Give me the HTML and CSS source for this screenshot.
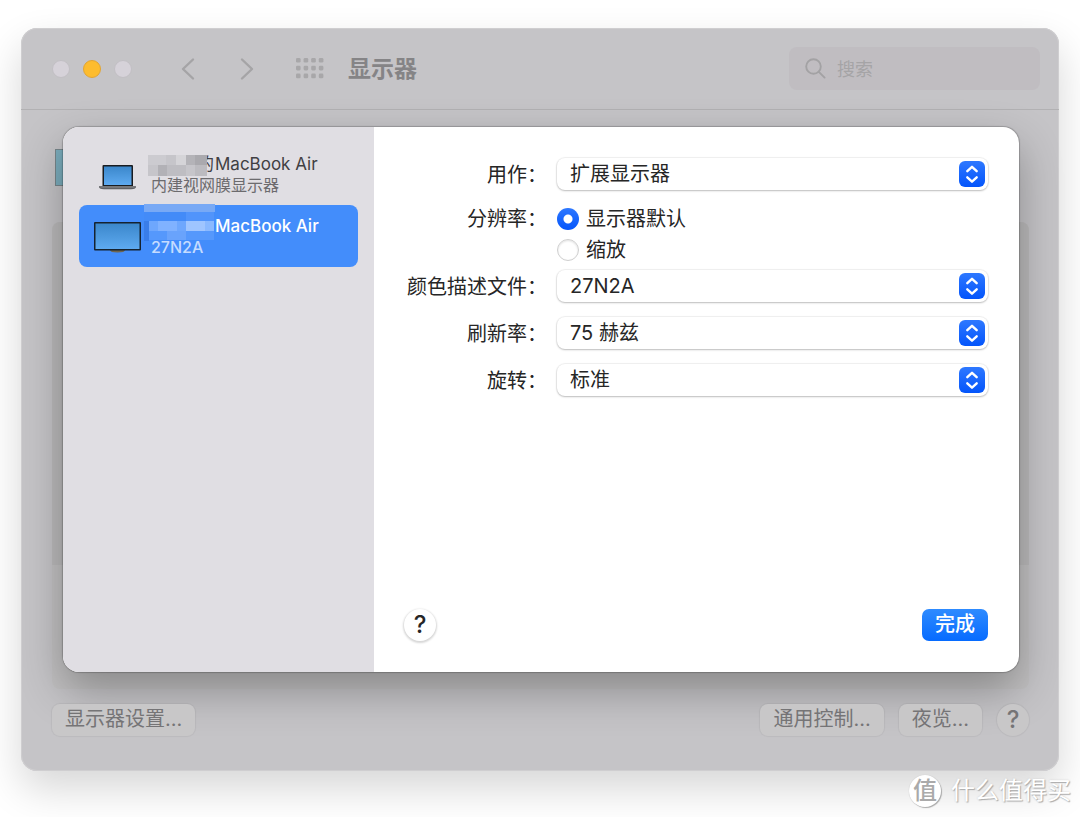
FILE: index.html
```html
<!DOCTYPE html>
<html lang="zh-CN">
<head>
<meta charset="utf-8">
<title>显示器</title>
<meta name="viewport" content="width=device-width, initial-scale=1">
<link rel="stylesheet" href="styles.css">
</head>
<body>
<svg class="defs" aria-hidden="true">
  <defs>
    <linearGradient id="screen" x1="0" y1="0" x2="0" y2="1">
      <stop offset="0" stop-color="#3b87cb"/><stop offset="1" stop-color="#5eaaf0"/>
    </linearGradient>
    <symbol id="chevrons" viewBox="0 0 26 26">
      <path d="M8.300 10.200 13 5.800l4.700 4.400M8.300 16.300 13 20.700l4.700-4.400" fill="none" stroke="#fff" stroke-width="2.400" stroke-linecap="round" stroke-linejoin="round"/>
    </symbol>
  </defs>
</svg>

<main class="window">
  <header class="toolbar">
    <div class="lights">
      <button class="light" aria-label="关闭"></button>
      <button class="light light--minimize" aria-label="最小化"></button>
      <button class="light" aria-label="缩放窗口"></button>
    </div>
    <nav class="nav">
      <button class="plain" aria-label="后退"><svg width="14" height="24" viewBox="0 0 14 24"><path d="M12 2.500 2 12l10 9.500" fill="none" stroke="#a5a4a6" stroke-width="2.400" stroke-linecap="round" stroke-linejoin="round"/></svg></button>
      <button class="plain" aria-label="前进"><svg width="14" height="24" viewBox="0 0 14 24"><path d="M2 2.500 12 12 2 21.500" fill="none" stroke="#a5a4a6" stroke-width="2.400" stroke-linecap="round" stroke-linejoin="round"/></svg></button>
    </nav>
    <button class="plain" aria-label="显示全部">
      <svg width="28" height="21" viewBox="0 0 28 21" fill="#a8a7a9">
        <g id="dots"><rect x="0" width="4.600" height="4.600" rx="1.300"/><rect x="7.600" width="4.600" height="4.600" rx="1.300"/><rect x="15.200" width="4.600" height="4.600" rx="1.300"/><rect x="22.800" width="4.600" height="4.600" rx="1.300"/></g>
        <use href="#dots" y="7.800"/><use href="#dots" y="15.600"/>
      </svg>
    </button>
    <h1 class="title">显示器</h1>
    <label class="search">
      <svg width="21" height="21" viewBox="0 0 21 21" fill="none" stroke="#a3a2a4" stroke-width="1.900" stroke-linecap="round"><circle cx="8.500" cy="8.500" r="7.300"/><path d="m13.800 13.800 5.800 5.800"/></svg>
      <input type="search" placeholder="搜索" aria-label="搜索">
    </label>
  </header>

  <section class="content">
    <div class="thumb"></div>
    <div class="panel"><div class="panel-top"></div></div>
    <footer class="actions">
      <button class="btn">显示器设置...</button>
      <div class="actions-end">
        <button class="btn">通用控制...</button>
        <button class="btn">夜览...</button>
        <button class="help help--dim" aria-label="帮助">?</button>
      </div>
    </footer>
  </section>

  <section class="sheet" role="dialog" aria-label="显示器设置">
    <aside class="sidebar">
      <button class="device">
        <svg class="device-icon" width="48" height="40" viewBox="0 0 48 40">
          <rect x="8.500" y="11" width="30.500" height="22" rx="1" fill="#191c20"/>
          <rect x="10" y="12.500" width="27.500" height="18.500" fill="url(#screen)"/>
          <path d="M5 32h37v1.500q-2 1.500-5 1.500H10q-3 0-5-1.500z" fill="#77787b"/><path d="M5.500 33.700q2 1.100 4.500 1.100h27q2.500 0 4.500-1.100" fill="none" stroke="#505155" stroke-width=".8"/>
        </svg>
        <span class="device-text">
          <span class="device-name">
            <svg class="mosaic" width="59" height="21" viewBox="0 0 59 21" shape-rendering="crispEdges">
              <rect width="59" height="21" fill="#c6c5ca"/><path d="M0 0h18v10H0z" fill="#cccbd0"/><path d="M28 0h10v10H28z" fill="#d5d4d8"/><path d="M38 0h9v10H38z" fill="#b4b3b8"/><path d="M47 0h12v10H47z" fill="#aaa9ae"/><path d="M10 10h9v11H10z" fill="#b2b1b6"/><path d="M19 10h19v11H19z" fill="#bebdc2"/><path d="M47 10h12v11H47z" fill="#bcbbc0"/>
            </svg><span>的</span><span class="model">MacBook Air</span>
          </span>
          <span class="device-sub">内建视网膜显示器</span>
        </span>
      </button>
      <button class="device device--selected" aria-current="true">
        <svg class="device-icon" width="48" height="40" viewBox="0 0 48 40">
          <path d="M16 34h15q0 2.500-7.500 2.500T16 34z" fill="#6f6650"/>
          <rect x="0" y="6" width="47" height="28.500" rx="1" fill="#15222f"/>
          <rect x="1.500" y="7.500" width="44" height="25.500" fill="url(#screen)"/>
        </svg>
        <span class="device-text">
          <span class="device-name">
            <svg class="mosaic mosaic--selected" width="71" height="37" viewBox="0 0 71 37" shape-rendering="crispEdges">
              <path d="M0 0h71v8H0z" fill="#78a9f5"/><path d="M0 8h42v9H0z" fill="#438bf8"/><path d="M42 8h28v9H42z" fill="#5194fb"/><path d="M0 17h5v20H0z" fill="#397de9"/><path d="M5 17h65v10H5z" fill="#6ea7fd"/><path d="M14 17h19v10H14z" fill="#80b2ff"/><path d="M42 17h19v10H42z" fill="#9fc5ff"/><path d="M61 17h9v10h-9z" fill="#8ab9ff"/><path d="M5 27h65v9H5z" fill="#5598fc"/><path d="M23 27h19v9H23z" fill="#69a3fc"/>
            </svg><span class="model">MacBook Air</span>
          </span>
          <span class="device-sub">27N2A</span>
        </span>
      </button>
    </aside>

    <form class="settings">
      <div class="fields">
        <div class="field">
          <label class="label" for="use">用作：</label>
          <div class="select"><select id="use"><option>扩展显示器</option></select><span class="knob"><svg width="26" height="26"><use href="#chevrons"/></svg></span></div>
        </div>
        <div class="field field--choices" role="radiogroup" aria-labelledby="res">
          <span class="label" id="res">分辨率：</span>
          <div class="choices">
            <label class="choice"><input type="radio" name="res" checked>显示器默认</label>
            <label class="choice"><input type="radio" name="res">缩放</label>
          </div>
        </div>
        <div class="field">
          <label class="label" for="profile">颜色描述文件：</label>
          <div class="select"><select id="profile"><option>27N2A</option></select><span class="knob"><svg width="26" height="26"><use href="#chevrons"/></svg></span></div>
        </div>
        <div class="field">
          <label class="label" for="rate">刷新率：</label>
          <div class="select"><select id="rate"><option>75 赫兹</option></select><span class="knob"><svg width="26" height="26"><use href="#chevrons"/></svg></span></div>
        </div>
        <div class="field">
          <label class="label" for="rotation">旋转：</label>
          <div class="select"><select id="rotation"><option>标准</option></select><span class="knob"><svg width="26" height="26"><use href="#chevrons"/></svg></span></div>
        </div>
      </div>
      <div class="sheet-actions">
        <button type="button" class="help" aria-label="帮助">?</button>
        <button type="button" class="done">完成</button>
      </div>
    </form>
  </section>
</main>

<div class="watermark"><span class="badge">值</span><span>什么值得买</span></div>
</body>
</html>
```

FILE: styles.css
```css
* { box-sizing: border-box; }

body {
  position: relative;
  display: flex;
  min-height: 100vh;
  margin: 0;
  padding: 28px 21px 46px;
  overflow-x: hidden;
  background: #fff;
  color: #262626;
  font: 20px/28px Inter, "Noto Sans CJK SC", sans-serif;
}

button, input, select { margin: 0; font: inherit; color: inherit; }
button { padding: 0; border: 0; background: none; }
svg { display: block; flex: none; }
.defs { position: absolute; width: 0; height: 0; }

.window {
  position: relative;
  display: flex;
  flex: 1;
  flex-direction: column;
  min-width: 0;
  border-radius: 16px;
  background: #c5c4c7;
  box-shadow: inset 0 0 0 1px #cfced0, 0 18px 40px rgba(0, 0, 0, .16);
}

/* Toolbar */
.toolbar {
  display: flex;
  align-items: center;
  height: 82px;
  padding: 0 19px 0 31px;
  border-bottom: 1px solid #b2b1b3;
}
.lights { display: flex; gap: 13px; }
.light {
  width: 18px;
  height: 18px;
  border: 1px solid #c2bfc4;
  border-radius: 50%;
  background: #d6d2d9;
}
.light--minimize { border-color: #e2a532; background: #fdbc2e; }
.nav { display: flex; gap: 45px; margin: 0 42px 0 49px; }
.title {
  margin: 0 0 0 24px;
  color: #858486;
  font-size: 23px;
  font-weight: 700;
  line-height: 32px;
}
.search {
  display: flex;
  align-items: center;
  gap: 11px;
  width: 251px;
  height: 43px;
  margin-left: auto;
  padding: 0 16px;
  border-radius: 8px;
  background: #c0bdc1;
}
.search input {
  flex: 1;
  min-width: 0;
  padding: 2px 0 0;
  border: 0;
  outline: 0;
  background: none;
  font-size: 18px;
}
.search input::placeholder { color: #a5a4a6; opacity: 1; }

/* Window content */
.content {
  display: flex;
  flex: 1;
  flex-direction: column;
  padding: 39px 30px 35px 31px;
}
.thumb {
  width: 60px;
  height: 37px;
  margin-left: 3px;
  border: 1px solid #77868b;
  background: #7badbd;
}
.panel {
  flex: 1;
  margin: 36px 0 15px;
  overflow: hidden;
  border-radius: 8px;
  background: #c2c1c2;
}
.panel-top { height: 343px; background: #bbbabb; }
.actions { display: flex; justify-content: space-between; color: #757476; }
.actions-end { display: flex; gap: 15px; }
.btn {
  position: relative;
  z-index: 2;
  height: 32px;
  padding: 0 13px 2px;
  border-radius: 8px;
  background: #c8c7c8;
  box-shadow: 0 0 1px 1px rgba(0, 0, 0, .05);
}
.help {
  width: 32px;
  height: 32px;
  border-radius: 50%;
  background: #fff;
  box-shadow: 0 1px 2px 1px rgba(0, 0, 0, .16);
  font-size: 24px;
  font-weight: 500;
}
.help--dim {
  position: relative;
  z-index: 2;
  background: #c8c7c8;
  box-shadow: 0 0 1px 1px rgba(0, 0, 0, .05);
}

/* Settings sheet, floating over the window */
.sheet {
  position: absolute;
  z-index: 1;
  inset: 99px 40px 99px 42px;
  display: flex;
  overflow: hidden;
  border-radius: 16px;
  background: #fff;
  box-shadow: 0 0 1px 1px rgba(0, 0, 0, .2), 0 18px 44px rgba(0, 0, 0, .3);
}
.sidebar {
  flex: none;
  width: 311px;
  padding: 16px;
  background: #e0dee3;
}
.device {
  display: flex;
  align-items: center;
  gap: 9px;
  width: 100%;
  height: 62px;
  padding: 0 15px;
  border-radius: 8px;
  color: #414043;
  text-align: left;
}
.device-text { display: flex; flex-direction: column; padding-top: 1px; }
.device-name {
  display: flex;
  align-items: center;
  height: 21px;
  font-size: 17px;
}
.device-sub {
  height: 21px;
  color: #6c6b6e;
  font-size: 16px;
  line-height: 21px;
}
.mosaic { position: relative; margin: 3px -10px 0 -3px; }
.mosaic--selected { margin: -8px 0 0 -7px; }
.device--selected { background: #438dfb; color: #fff; font-weight: 500; }
.device--selected .device-sub { color: #c5dcff; }
.model { margin-left: 1px; white-space: nowrap; }
.device--selected .model { margin-left: 0; }

.settings {
  display: flex;
  flex: 1;
  flex-direction: column;
  justify-content: space-between;
  min-width: 0;
  padding: 31px 31px 31px 30px;
}
.field {
  display: grid;
  grid-template-columns: 143px minmax(0, 1fr);
  column-gap: 10px;
  margin-top: 15px;
}
.field:first-child { margin-top: 0; }
.field--choices { margin-top: 13px; }
.field--choices + .field { margin-top: 5px; }
.label { line-height: 34px; height: 32px; text-align: right; white-space: nowrap; }
.field--choices .label { line-height: 32px; }
.select { position: relative; }
.select select {
  display: block;
  width: 100%;
  height: 32px;
  padding: 0 40px 1px 13px;
  appearance: none;
  border: 0;
  border-radius: 8px;
  background: #fff;
  box-shadow: 0 0 1px 1px rgba(0, 0, 0, .06), 0 1px 2px rgba(0, 0, 0, .22);
}
.knob {
  position: absolute;
  top: 3px;
  right: 3px;
  border-radius: 6px;
  background: linear-gradient(#2e78ff, #0455fb);
  pointer-events: none;
}
.choice { display: flex; align-items: center; gap: 7px; height: 31px; }
.choice input {
  width: 22px;
  height: 22px;
  appearance: none;
  border: 1px solid #cfcfcf;
  border-radius: 50%;
  background: #fff;
  box-shadow: inset 0 1px 2px rgba(0, 0, 0, .12);
}
.choice input:checked {
  border: 0;
  background: radial-gradient(circle, #fff 4px, transparent 5px), linear-gradient(#2e78ff, #0455fb);
  box-shadow: none;
}

.sheet-actions { display: flex; align-items: center; justify-content: space-between; }
.done {
  height: 32px;
  padding: 0 13px 2px;
  border-radius: 7px;
  background: linear-gradient(#2e8bff, #066bff);
  color: #fff;
  font-weight: 500;
}

.watermark {
  position: absolute;
  right: 9px;
  bottom: 10px;
  display: flex;
  align-items: center;
  gap: 10px;
  color: #fff;
  font-size: 24px;
  line-height: 32px;
  text-shadow: 1px 1px 1px #aaa, 0 0 2px #ccc;
}
.badge {
  width: 32px;
  height: 32px;
  border-radius: 50%;
  background: #fff;
  box-shadow: 1px 1px 1px #aaa, 0 0 1px #bbb;
  color: #aaa;
  font-weight: 500;
  text-align: center;
  text-shadow: none;
}
```
